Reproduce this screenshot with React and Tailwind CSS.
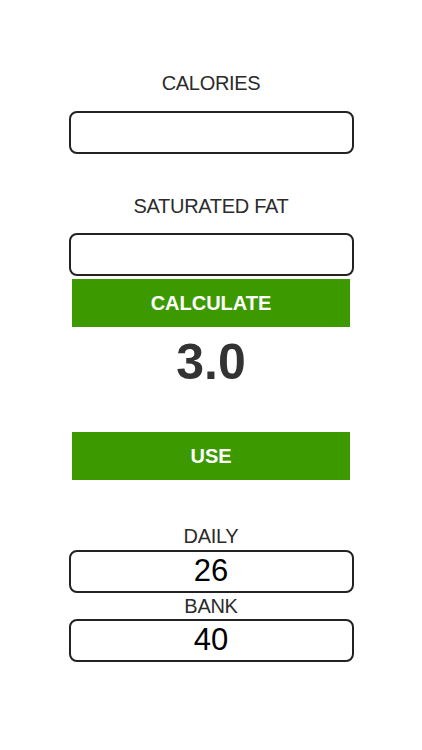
import { useState } from 'react';

const Label = ({ children, className = '' }) => (
  <div className={`text-[20px] leading-[24px] text-[#2b2b2b] tracking-[-0.3px] ${className}`}>{children}</div>
);

const Box = ({ value, onChange, className = '' }) => (
  <input
    type="text"
    value={value}
    onChange={(e) => onChange && onChange(e.target.value)}
    className={`block w-[285px] h-[43px] border-2 border-[#222] rounded-[8px] bg-white text-center text-[31px] text-black outline-none ${className}`}
  />
);

const GreenButton = ({ children, onClick, className = '' }) => (
  <button
    onClick={onClick}
    className={`block w-[278px] h-[48px] bg-[#3d9900] text-white font-bold text-[20px] ${className}`}
  >
    {children}
  </button>
);

export default function App() {
  const [calories, setCalories] = useState('');
  const [fat, setFat] = useState('');
  const [result, setResult] = useState('3.0');
  const [daily, setDaily] = useState('26');
  const [bank, setBank] = useState('40');

  const calculate = () => {
    const c = parseFloat(calories) || 0;
    const f = parseFloat(fat) || 0;
    setResult(((c + f * 11) / 33).toFixed(1));
  };

  return (
    <div className="w-full min-h-[750px] bg-white flex flex-col items-center font-['Liberation_Sans',Arial,sans-serif]">
      <Label className="mt-[71px]">CALORIES</Label>
      <Box value={calories} onChange={setCalories} className="mt-[16px]" />

      <Label className="mt-[40px]">SATURATED FAT</Label>
      <Box value={fat} onChange={setFat} className="mt-[15px]" />

      <GreenButton onClick={calculate} className="mt-[3px]">CALCULATE</GreenButton>

      <div className="mt-[10px] text-[50px] leading-[50px] font-bold text-[#333]">{result}</div>

      <GreenButton className="mt-[45px]">USE</GreenButton>

      <Label className="mt-[44px]">DAILY</Label>
      <Box value={daily} onChange={setDaily} className="mt-[2px]" />

      <Label className="mt-[1px]">BANK</Label>
      <Box value={bank} onChange={setBank} className="mt-[1px]" />
    </div>
  );
}
